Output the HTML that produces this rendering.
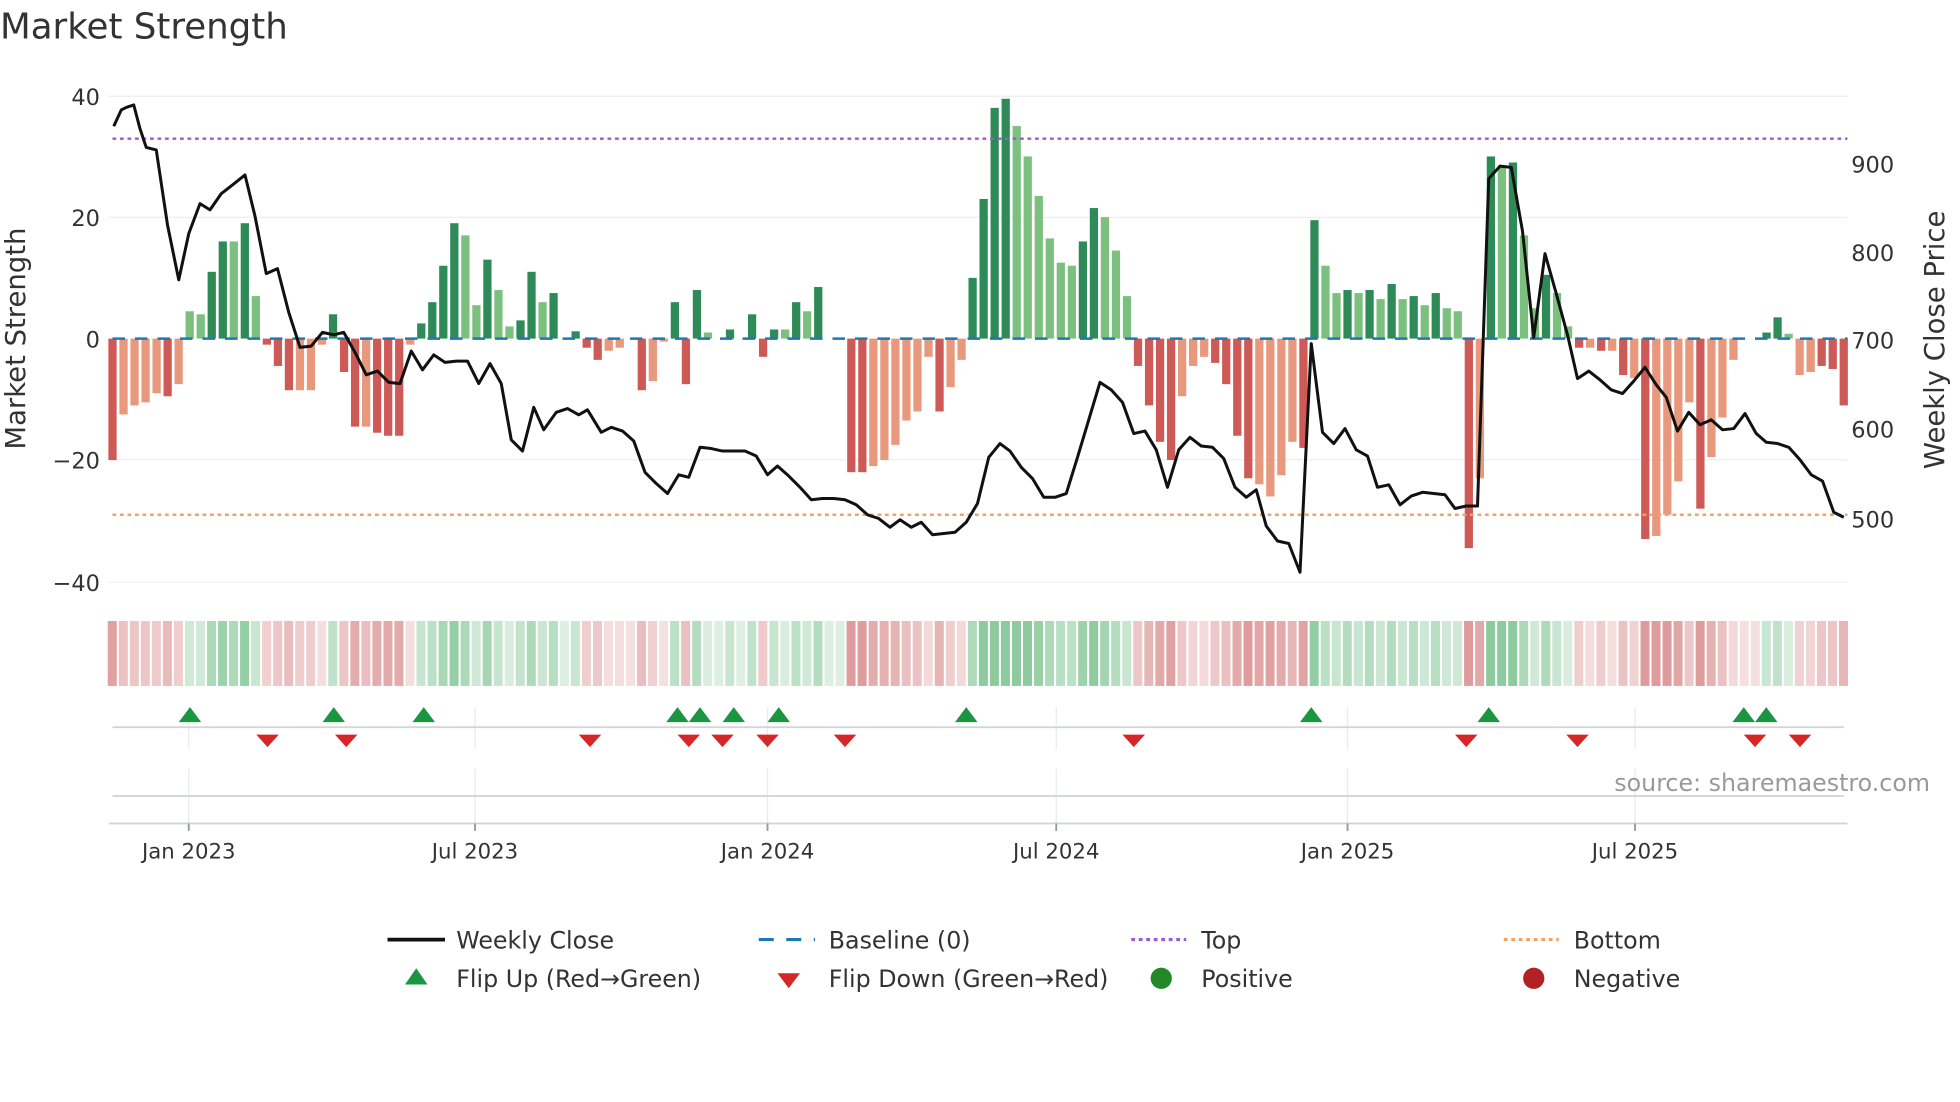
<!DOCTYPE html>
<html><head><meta charset="utf-8"><style>
html,body{margin:0;padding:0;background:#fff;overflow:hidden}
svg{display:block}
text{font-family:"DejaVu Sans","Liberation Sans",sans-serif;fill:#333}
</style></head><body>
<svg id="s" width="1960" height="1102" viewBox="0 0 1568 882" preserveAspectRatio="none" xmlns="http://www.w3.org/2000/svg">
<text x="0" y="31" font-size="28.5">Market Strength</text>
<g stroke="#eceef0" stroke-width="1">
<line x1="87" y1="77" x2="1478" y2="77"/><line x1="87" y1="174" x2="1478" y2="174"/>
<line x1="87" y1="368" x2="1478" y2="368"/><line x1="87" y1="466" x2="1478" y2="466"/>
</g>
<g font-size="18" text-anchor="end">
<text x="80" y="84">40</text><text x="80" y="181">20</text><text x="80" y="278">0</text>
<text x="80" y="375">−20</text><text x="80" y="473">−40</text>
</g>
<g font-size="18">
<text x="1481" y="138">900</text><text x="1481" y="209">800</text><text x="1481" y="279">700</text>
<text x="1481" y="350">600</text><text x="1481" y="422">500</text>
</g>
<text transform="translate(20,271) rotate(-90)" font-size="22" text-anchor="middle">Market Strength</text>
<text transform="translate(1555,272) rotate(-90)" font-size="22" text-anchor="middle">Weekly Close Price</text>
<g id="bars"></g>
<line x1="90" y1="271" x2="1478" y2="271" stroke="#1f77b4" stroke-width="2" stroke-dasharray="10,8"/>
<line x1="90" y1="111" x2="1478" y2="111" stroke="#9b59d6" stroke-width="2" stroke-dasharray="3,3"/>
<line x1="90" y1="412" x2="1478" y2="412" stroke="#f4a261" stroke-width="2" stroke-dasharray="3,3"/>
<polyline id="price" fill="none" stroke="#111" stroke-width="2.4" stroke-linejoin="round"/>
<g id="strip"></g>
<g stroke="#e8ebef" stroke-width="1">
<line x1="151" y1="566" x2="151" y2="600"/><line x1="380" y1="566" x2="380" y2="600"/><line x1="614" y1="566" x2="614" y2="600"/><line x1="845" y1="566" x2="845" y2="600"/><line x1="1078" y1="566" x2="1078" y2="600"/><line x1="1308" y1="566" x2="1308" y2="600"/>
<line x1="151" y1="615" x2="151" y2="659"/><line x1="380" y1="615" x2="380" y2="659"/><line x1="614" y1="615" x2="614" y2="659"/><line x1="845" y1="615" x2="845" y2="659"/><line x1="1078" y1="615" x2="1078" y2="659"/><line x1="1308" y1="615" x2="1308" y2="659"/>
</g>
<line x1="90" y1="582" x2="1475" y2="582" stroke="#d3d5d8" stroke-width="1.5"/>
<line x1="90" y1="637" x2="1475" y2="637" stroke="#d3d5d8" stroke-width="1.5"/>
<line x1="87" y1="659" x2="1478" y2="659" stroke="#d3d5d8" stroke-width="1.5"/>
<g stroke="#999" stroke-width="1.5">
<line x1="151" y1="659" x2="151" y2="665"/><line x1="380" y1="659" x2="380" y2="665"/><line x1="614" y1="659" x2="614" y2="665"/><line x1="845" y1="659" x2="845" y2="665"/><line x1="1078" y1="659" x2="1078" y2="665"/><line x1="1308" y1="659" x2="1308" y2="665"/>
</g>
<g id="marks"></g>
<text x="1544" y="633" font-size="19" text-anchor="end" style="fill:#999">source: sharemaestro.com</text>
<g font-size="17" text-anchor="middle">
<text x="151" y="687">Jan 2023</text><text x="380" y="687">Jul 2023</text><text x="614" y="687">Jan 2024</text>
<text x="845" y="687">Jul 2024</text><text x="1078" y="687">Jan 2025</text><text x="1308" y="687">Jul 2025</text>
</g>
<g font-size="19">
<line x1="310" y1="752" x2="356" y2="752" stroke="#111" stroke-width="3"/><text x="365" y="759">Weekly Close</text>
<line x1="607" y1="752" x2="652" y2="752" stroke="#1f77b4" stroke-width="2.5" stroke-dasharray="12,10"/><text x="663" y="759">Baseline (0)</text>
<line x1="905" y1="752" x2="949" y2="752" stroke="#9b59d6" stroke-width="2.5" stroke-dasharray="3,3"/><text x="961" y="759">Top</text>
<line x1="1203" y1="752" x2="1247" y2="752" stroke="#f4a261" stroke-width="2.5" stroke-dasharray="3,3"/><text x="1259" y="759">Bottom</text>
<polygon points="324,788 342,788 333,775" fill="#1a9641"/><text x="365" y="790">Flip Up (Red→Green)</text>
<polygon points="622,779 640,779 631,791" fill="#d62728"/><text x="663" y="790">Flip Down (Green→Red)</text>
<circle cx="929" cy="783" r="8.5" fill="#22882a"/><text x="961" y="790">Positive</text>
<circle cx="1227" cy="783" r="8.5" fill="#b22222"/><text x="1259" y="790">Negative</text>
</g>
</svg>
<script>
const NS="http://www.w3.org/2000/svg";
const raw="d-20 l-12.5 l-11 l-10.5 l-9 d-9.5 l-7.5 l4.5 l4 d11 d16 l16 d19 l7 d-1 d-4.5 d-8.5 l-8.5 l-8.5 l-1 d4 d-5.5 d-14.5 l-14.5 d-15.5 d-16 d-16 l-1 d2.5 d6 d12 d19 l17 l5.5 d13 l8 l2 d3 d11 l6 d7.5 l0 d1.2 d-1.5 d-3.5 l-2 l-1.5 l0 d-8.5 l-7 l-0.5 d6 d-7.5 d8 l1 l0 d1.5 l0 d4 d-3 d1.5 l1.5 d6 l4.5 d8.5 l0 l0 d-22 d-22 l-21 l-20 l-17.5 l-13.5 l-12 l-3 d-12 l-8 l-3.5 d10 d23 d38 d39.5 l35 l30 l23.5 l16.5 l12.5 l12 d16 d21.5 l20 l14.5 l7 d-4.5 d-11 d-17 d-20 l-9.5 l-4.5 l-3 d-4 d-7.5 d-16 d-23 l-24 l-26 l-22.5 l-17 d-18 d19.5 l12 l7.5 d8 l7.5 d8 l6.5 d9 l6.5 d7 l5.5 d7.5 l5 l4.5 d-34.5 l-23 d30 l28.5 d29 l17 l5 d10.5 l7.5 l2 d-1.5 l-1.5 d-2 l-2 d-6 l-6.5 d-33 l-32.5 l-29 l-23.5 l-10.5 d-28 l-19.5 l-13 l-3.5 l0 l0 d1 d3.5 l0.8 l-6 l-5.5 d-4.5 d-5 d-11".split(" ");
const n=raw.length, x0=90, dx=(1475-90)/(n-1);
const bars=document.getElementById("bars"), strip=document.getElementById("strip");
let prevSign=-1;
raw.forEach((r,i)=>{
  const d=r[0]==="d", v=parseFloat(r.slice(1)), x=x0+i*dx;
  if(v!==0){
    const y0=271, y1=271-v*4.86;
    const rc=document.createElementNS(NS,"rect");
    rc.setAttribute("x",x-3.3);rc.setAttribute("width",6.6);
    rc.setAttribute("y",Math.min(y0,y1));rc.setAttribute("height",Math.abs(y1-y0));
    rc.setAttribute("fill",v>0?(d?"#2e8b57":"#7cc07f"):(d?"#cd5a57":"#e8987c"));
    bars.appendChild(rc);
    prevSign=v>0?1:-1;
  }
  const s=prevSign, a=Math.min(1,0.3+Math.abs(v)/40+(d?0.15:0));
  const c=document.createElementNS(NS,"rect");
  c.setAttribute("x",x-3.8);c.setAttribute("width",7.2);c.setAttribute("y",497);c.setAttribute("height",52);
  c.setAttribute("fill",s>0?"#2fa04e":"#c44a4a");c.setAttribute("fill-opacity",(a*0.55).toFixed(2));
  strip.appendChild(c);
});
const pts="91,101 97,88 101,86 107,84 112,103 117,118 125,120 134,180 143,224 151,187 160,163 168,168 177,155 186,148 196,140 204,173 213,219 222,215 231,250 240,278 249,277 258,266 267,268 275,266 284,282 293,300 302,297 311,306 320,307 329,281 338,296 347,284 356,290 365,289 374,289 383,307 392,291 401,307 409,352 418,361 427,326 435,344 445,330 454,327 463,332 470,328 481,346 489,342 498,345 507,353 516,378 525,387 534,395 543,380 551,382 560,358 569,359 578,361 587,361 596,361 605,365 614,380 622,373 631,381 640,390 649,400 658,399 667,399 676,400 685,404 694,412 703,415 712,422 720,416 729,422 737,418 746,428 755,427 764,426 773,418 782,403 791,366 800,355 808,361 817,374 826,383 835,398 844,398 853,395 862,366 871,336 880,306 889,312 898,322 907,347 916,345 925,360 934,390 943,360 952,350 961,357 970,358 979,367 988,390 997,398 1005,392 1013,421 1022,433 1031,435 1040,458 1049,275 1058,346 1067,355 1076,343 1085,360 1094,365 1102,390 1111,388 1120,404 1129,397 1138,394 1147,395 1156,396 1164,407 1173,405 1182,405 1191,143 1200,133 1209,134 1218,185 1227,270 1236,203 1245,235 1254,268 1262,303 1271,297 1280,304 1289,312 1298,315 1307,305 1316,294 1325,308 1333,318 1342,345 1351,330 1360,340 1369,336 1378,344 1387,343 1396,331 1405,347 1413,354 1422,355 1431,358 1440,368 1449,380 1458,385 1467,410 1475,414";
document.getElementById("price").setAttribute("points",pts);
const marks=document.getElementById("marks");
[152,267,339,542,560,587,623,773,1049,1191,1395,1413].forEach(x=>{
  const p=document.createElementNS(NS,"polygon");
  p.setAttribute("points",`${x-9},578 ${x+9},578 ${x},566`);p.setAttribute("fill","#1a9641");marks.appendChild(p);
});
[214,277,472,551,578,614,676,907,1173,1262,1404,1440].forEach(x=>{
  const p=document.createElementNS(NS,"polygon");
  p.setAttribute("points",`${x-9},588 ${x+9},588 ${x},598`);p.setAttribute("fill","#d62728");marks.appendChild(p);
});
</script>
</body></html>
